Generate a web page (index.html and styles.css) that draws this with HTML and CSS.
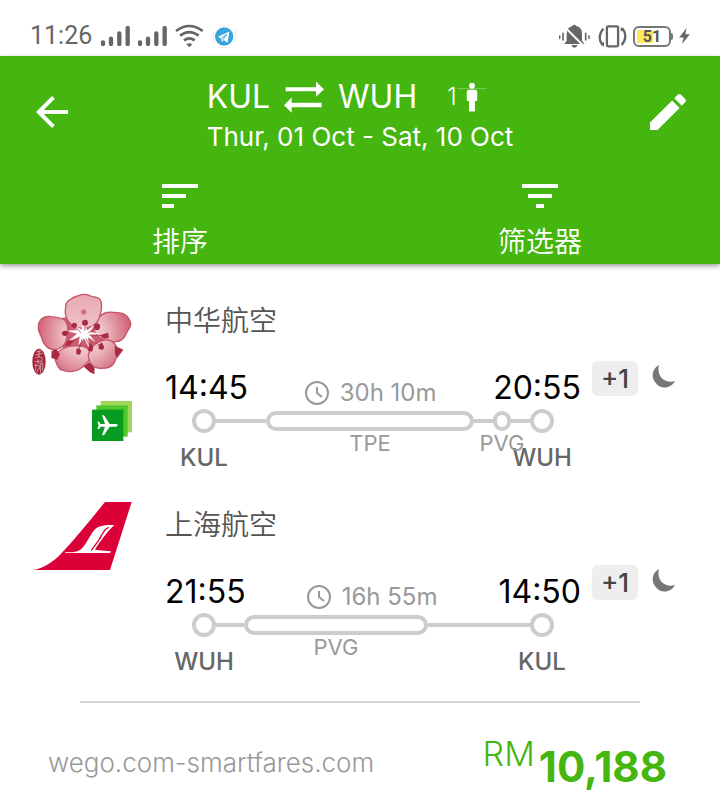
FILE: index.html
```html
<!DOCTYPE html>
<html lang="zh-CN">
<head>
<meta charset="utf-8">
<meta name="viewport" content="width=device-width, initial-scale=1">
<title>KUL – WUH</title>
<link rel="stylesheet" href="styles.css">
</head>
<body>
<div class="status">
  <span class="clock">11:26</span>
  <svg class="signal" viewBox="243 33 87 60" aria-hidden="true"><path d="M249 82v5M273 71v16M298 55v32M323 39v48"/></svg>
  <svg class="signal" viewBox="243 33 87 60" aria-hidden="true"><path d="M249 82v5M273 71v16M298 55v32M323 39v48"/></svg>
  <svg class="wifi" viewBox="465 27 87 72" aria-hidden="true"><path d="M468 48Q508 18 548 48M480 62Q508 41 536 62M492 76Q508 64 524 76"/><path class="solid" d="M499 88q9-6 18 0l-9 9z"/></svg>
  <svg class="telegram" viewBox="581 28 70 70" aria-hidden="true"><path class="corners" d="M582 42v42M649 42v42M596 29h38M596 97h38"/><circle cx="615" cy="63" r="28"/><path class="plane" d="M596 64l35-16-6 34-11-8-6 6-2-10z"/><path class="fold" d="M606 69l17-13-12 17"/></svg>
  <div class="status-right">
    <svg class="muted" viewBox="42 26 93 72" aria-hidden="true"><path d="M58 86l7-10V55q1-19 17-23 6-7 12 0 17 4 17 23v21l7 10zM79 89h19q-3 8-10 8t-9-8z"/><path class="slash" d="M55 31l61 61"/><path class="bars" d="M44 62v7M54 54v20M122 54v20M132 62v7"/></svg>
    <svg class="rotate" viewBox="160 28 86 70" aria-hidden="true"><rect x="186" y="32" width="34" height="61" rx="4"/><path d="M175 39q-21 26-2 51M231 89q21-26 2-51"/><path class="solid" d="M166 82l11-2v15zM240 45l-12 2V33z"/></svg>
    <div class="battery"><span>51</span></div>
    <svg class="bolt" viewBox="402 39 33 49" aria-hidden="true"><path d="M425 39l-23 29h14l-5 20 24-30h-14z"/></svg>
  </div>
</div>

<header class="header">
  <div class="bar">
    <button class="icon-button" type="button" aria-label="返回"><svg viewBox="0 0 24 24"><path d="M20 11H7.830l5.590-5.590L12 4l-8 8 8 8 1.410-1.410L7.830 13H20z"/></svg></button>
    <div class="trip">
      <h1 class="route">
        <span>KUL</span>
        <svg class="swap" viewBox="283 48 120 95" aria-hidden="true"><path d="M288 66h91V49l24 23-24 23V78h-91zM396 113h-90V97l-23 23 23 23v-17h90z"/></svg>
        <span>WUH</span>
        <span class="travellers">1<svg class="person" viewBox="806 48 92 95" aria-hidden="true"><path class="line" d="M806 70h91"/><circle cx="852" cy="61" r="9"/><path d="M843 73h18q7 0 7 8v24q0 3-3 3h-4v32h-18v-32h-4q-3 0-3-3V81q0-8 7-8z"/></svg></span>
      </h1>
      <p class="dates">Thur, 01 Oct - Sat, 10 Oct</p>
    </div>
    <button class="icon-button" type="button" aria-label="编辑"><svg viewBox="0 0 24 24"><path d="M3 17.250V21h3.750L17.810 9.940l-3.750-3.750zM20.710 7.040a1 1 0 0 0 0-1.410l-2.340-2.340a1 1 0 0 0-1.410 0l-1.830 1.830 3.750 3.750z"/></svg></button>
  </div>
  <div class="tools">
    <button class="tool" type="button"><svg viewBox="0 0 24 24" aria-hidden="true"><path d="M3 18h6v-2H3zM3 6v2h18V6zM3 13h12v-2H3z"/></svg>排序</button>
    <button class="tool" type="button"><svg viewBox="0 0 24 24" aria-hidden="true"><path d="M10 18h4v-2h-4zM3 6v2h18V6zM6 13h12v-2H6z"/></svg>筛选器</button>
  </div>
</header>

<main>
  <section class="leg">
    <div class="logos">
      <svg class="airline" viewBox="36 18 300 300" role="img" aria-label="中华航空">
        <defs>
          <radialGradient id="petal" gradientUnits="userSpaceOnUse" cx="193" cy="165" r="145"><stop offset="0" stop-color="#f7e0e2"/><stop offset=".45" stop-color="#edb9c0"/><stop offset="1" stop-color="#cf5c70"/></radialGradient>
          <linearGradient id="top" x1="0" y1="0" x2="0" y2="1"><stop offset="0" stop-color="#e9a9b3"/><stop offset="1" stop-color="#efc2c7"/></linearGradient>
        </defs>
        <g stroke="#c4566b" stroke-width="4" stroke-linejoin="round">
          <path fill="#cb5d71" d="M128 115l110-12 14 58-14 62-98 4-22-60z"/>
          <path fill="url(#petal)" d="M134 120c-12-8-28-8-40-10-22-5-39 10-39 31-1 15 7 21 10 33 5 21 20 36 40 35 17-1 29-12 34-30 6-21 8-44-5-59z"/>
          <path fill="url(#petal)" d="M234 115c17-21 35-20 58-17 22-1 36 13 40 30 2 13-7 20-12 30-7 19-21 29-41 27-23 0-42-10-54-28-8-14-1-31 9-42z"/>
          <path fill="url(#petal)" d="M127 207c20-11 43-11 64-7 15 4 24 17 20 32-5 16-18 24-30 34-15 11-39 11-56 4-12-4-15-19-19-30-2-15 8-26 21-33z"/>
          <path fill="url(#petal)" d="M205 225c8-28 30-43 56-46 19 2 28 14 30 31 3 14-3 27-8 37-8 16-26 19-45 18-17-2-33-14-33-40z"/>
          <path fill="url(#top)" d="M151 59c8-9 17-9 27-13 12-5 27-2 38 4 9 0 19 1 25 10 7 12 4 25 1 38-3 17-10 33-25 40-21 9-44 9-62-3-17-15-22-35-18-56 1-10 6-17 14-20z"/>
        </g>
        <path fill="#fff" stroke="#fff" stroke-width="2" d="M194 136l7 16 20-15-12 20 28 4-29 4 17 21-23-15 6 32-15-29-16 19 3-23-31 11 24-20-27-8 28-2-13-16 24 15 3-13 7 11z"/>
        <g stroke="#ad2942" stroke-width="2" fill="none"><path d="M163 134l20 25M196 128l-2 24M233 140l-30 20M258 167l-50-2M147 190l32-19M174 216l13-40M212 204l-14-28M244 200l-38-26"/></g>
        <g fill="#ab2a43"><circle cx="163" cy="136" r="8"/><circle cx="195" cy="128" r="9"/><ellipse cx="231" cy="140" rx="9" ry="10"/><ellipse cx="135" cy="160" rx="9" ry="8"/><path d="M239 166l25-8 3 16-16 2zM133 197l12-16 16 1-10 14zM169 208l7-4 8 8-4 12-11-1zM206 198l7-9 7 14-4 12-12-3zM236 195l9-8 8 14-5 9-12-3zM95 212l14-4 11 15-9 17-17-7zM284 197l26 12-19 26-6-13zM191 260l16-13 17 16-1 20-13-6z"/></g>
        <circle cx="191" cy="96" r="8" fill="#d5798b"/><circle cx="191" cy="96" r="3" fill="#b6536a"/>
        <ellipse cx="57" cy="245" rx="20" ry="39" fill="#a3273c"/>
        <path fill="none" stroke="#efc8cd" stroke-width="2" d="M49 216l16-4M46 225l22-5M57 210v22M46 234l10-4 12 5M44 244h22v-7M54 238v14M47 251v22M44 256h14v11M50 277l7-12M62 251v29M68 251v21M58 250h12"/>
      </svg>
      <svg class="multi" viewBox="216 363 120 120" role="img" aria-label="多家航空公司"><path fill="#a0d65c" d="M242 363h94v94h-94z"/><path fill="#51c72c" d="M229 376h94v94h-94z"/><path fill="#079b21" d="M216 389h94v94h-94z"/><path fill="#fff" d="M293 436q0-4-6-4h-18l-17-26h-6l9 26h-13l-5-7h-5l4 11-4 11h5l5-7h13l-9 26h6l17-26h18q6 0 6-4z"/></svg>
    </div>
    <div class="flight">
      <h2 class="name">中华航空</h2>
      <div class="times">
        <span class="time">14:45</span>
        <span class="duration"><svg viewBox="0 0 24 24" aria-hidden="true"><circle cx="12" cy="12" r="11"/><path d="M12 6v6l5 4"/></svg>30h 10m</span>
        <span class="time">20:55</span>
      </div>
      <div class="track">
        <span class="end"></span>
        <span class="line" style="flex-grow:50"></span>
        <span class="stop" style="flex-grow:200"><span class="stop-code">TPE</span></span>
        <span class="line" style="flex-grow:19"></span>
        <span class="stop" style="flex-grow:10"><span class="stop-code">PVG</span></span>
        <span class="line" style="flex-grow:19"></span>
        <span class="end"></span>
      </div>
      <div class="codes"><span>KUL</span><span>WUH</span></div>
    </div>
    <div class="notes">
      <span class="plus">+1</span>
      <svg class="moon" viewBox="0 0 24 24" role="img" aria-label="夜间航班"><path d="M7 0C0 4-1 12 3 17c5 8 16 7 20-1C13 19 4 11 7 0z"/></svg>
    </div>
  </section>

  <section class="leg">
    <div class="logos">
      <svg class="airline" viewBox="36 0 300 300" role="img" aria-label="上海航空">
        <path fill="#dc0038" d="M255 36h80l-65 204H40c29-6 58-22 83-49 45-47 88-101 132-155z"/>
        <path fill="#fff" d="M283 105c-29-1-51 2-62 17-17 23-25 46-40 57-13 9-33 9-45 7l-4-6 5 9h133l3-5-20-2-28-3c9-17 37-54 58-74z"/>
        <path fill="none" stroke="#dc0038" stroke-width="4" d="M266 112c-15 6-19 20-28 36l-24 33"/>
      </svg>
    </div>
    <div class="flight">
      <h2 class="name">上海航空</h2>
      <div class="times">
        <span class="time">21:55</span>
        <span class="duration"><svg viewBox="0 0 24 24" aria-hidden="true"><circle cx="12" cy="12" r="11"/><path d="M12 6v6l5 4"/></svg>16h 55m</span>
        <span class="time">14:50</span>
      </div>
      <div class="track">
        <span class="end"></span>
        <span class="line" style="flex-grow:28"></span>
        <span class="stop" style="flex-grow:176"><span class="stop-code">PVG</span></span>
        <span class="line" style="flex-grow:102"></span>
        <span class="end"></span>
      </div>
      <div class="codes"><span>WUH</span><span>KUL</span></div>
    </div>
    <div class="notes">
      <span class="plus">+1</span>
      <svg class="moon" viewBox="0 0 24 24" role="img" aria-label="夜间航班"><path d="M7 0C0 4-1 12 3 17c5 8 16 7 20-1C13 19 4 11 7 0z"/></svg>
    </div>
  </section>

  <div class="fare">
    <span class="site">wego.com-smartfares.com</span>
    <span class="price"><span class="currency">RM</span><strong>10,188</strong></span>
  </div>
</main>
</body>
</html>
```
FILE: styles.css
```css
* { box-sizing: border-box; }

body {
  margin: 0;
  background: #fff;
  color: #000;
  font-family: Inter, "Noto Sans CJK SC", sans-serif;
}

svg { display: block; flex: none; }
h1, h2, p { margin: 0; font-weight: 400; }

/* Status bar */
.status {
  display: flex;
  align-items: center;
  height: 56px;
  padding: 16px 30px 0 30px;
  color: #666;
  font-family: Roboto, sans-serif;
}
.clock { margin-right: 9px; font-size: 25px; line-height: 40px; }
.signal { width: 29px; height: 20px; margin-right: 8px; fill: none; stroke: #666; stroke-width: 13; stroke-linecap: round; }
.wifi { width: 29px; height: 24px; fill: none; stroke: #666; stroke-width: 8; }
.wifi .solid, .rotate .solid { fill: #666; stroke: none; }
.telegram { width: 23px; height: 23px; margin-left: 9px; fill: #38a4dc; }
.telegram .corners { fill: none; stroke: #ddd; stroke-width: 2; }
.telegram .plane { fill: #fff; }
.telegram .fold { fill: none; stroke: #38a4dc; stroke-width: 3; }
.status-right { display: flex; align-items: center; margin-left: auto; }
.muted { width: 31px; height: 24px; margin-right: 8px; fill: #666; }
.muted .slash { stroke: #fff; stroke-width: 6; }
.muted .bars { fill: none; stroke: #666; stroke-width: 5; stroke-linecap: round; }
.rotate { width: 29px; height: 23px; margin-right: 6px; fill: none; stroke: #666; stroke-width: 7; }
.battery {
  position: relative;
  width: 38px;
  height: 21px;
  margin-right: 8px;
  border: 2px solid #777;
  border-radius: 6px;
  background: linear-gradient(#ffe75e, #ffe75e) 2px 2px / 16px 13px no-repeat;
  color: #555;
  font-size: 16px;
  font-weight: 700;
  line-height: 17px;
  text-align: center;
}
.battery::after {
  content: "";
  position: absolute;
  top: 5px;
  right: -4px;
  width: 2px;
  height: 7px;
  border-radius: 0 2px 2px 0;
  background: #777;
}
.bolt { width: 11px; height: 16px; fill: #666; }

/* Header */
.header {
  background: #45b50f;
  color: #fff;
  box-shadow: 0 2px 5px rgba(0, 0, 0, .4);
}
.header svg { fill: currentColor; }
button {
  padding: 0;
  border: 0;
  background: none;
  color: inherit;
  font: inherit;
  cursor: pointer;
}
.bar {
  display: flex;
  align-items: flex-start;
  justify-content: space-between;
  padding: 20px 28px 0;
}
.icon-button { margin-top: 12px; }
.icon-button svg, .tool svg { width: 48px; height: 48px; }
.route { display: flex; align-items: center; gap: 14px; font-size: 32px; line-height: 42px; }
.swap { width: 40px; height: 32px; }
.travellers { display: flex; align-items: center; margin-left: 16px; font-size: 24px; font-weight: 300; }
.person { width: 30px; height: 32px; }
.person .line { stroke: #fff; stroke-width: 2; opacity: .5; }
.dates { font-size: 26px; line-height: 38px; }
.tools { display: grid; grid-template-columns: 1fr 1fr; padding: 16px 0 0; }
.tool { display: flex; flex-direction: column; align-items: center; font-size: 28px; font-weight: 350; line-height: 44px; }

/* Flight legs */
main { padding: 22px 44px 0 32px; }
.leg { display: grid; grid-template-columns: 100px 1fr auto; margin-bottom: 15px; }
.logos { display: flex; flex-direction: column; align-items: flex-end; gap: 15px; }
.airline { width: 100px; height: 100px; }
.multi { width: 40px; height: 40px; }
.flight { padding: 15px 0 0 33px; }
.name { margin-bottom: 22px; color: #555; font-size: 28px; font-weight: 350; line-height: 40px; }
.times { display: flex; align-items: flex-start; justify-content: space-between; height: 46px; }
.time { font-size: 32px; line-height: 50px; }
.duration { display: flex; align-items: center; gap: 11px; padding-top: 12px; color: #999; font-size: 24px; line-height: 36px; }
.duration svg { width: 24px; height: 24px; fill: none; stroke: #999; stroke-width: 2; }
.track { display: flex; align-items: center; padding: 0 27px; }
.end { flex: none; width: 24px; height: 24px; border: 4px solid #ccc; border-radius: 50%; }
.line { flex: 1 1 0; height: 4px; background: #ccc; }
.stop { position: relative; flex: 1 1 0; height: 20px; border: 4px solid #ccc; border-radius: 10px; }
.stop-code {
  position: absolute;
  top: 14px;
  left: 50%;
  transform: translateX(-50%);
  color: #999;
  font-size: 22px;
  line-height: 28px;
}
.codes { display: flex; justify-content: space-between; padding-top: 8px; color: #666; font-size: 24px; font-weight: 500; line-height: 34px; }
.codes span { width: 78px; text-align: center; }
.notes { display: flex; align-items: center; gap: 14px; height: 35px; margin: 75px 0 0 11px; }
.plus { width: 46px; border-radius: 6px; background: #eee; color: #444; font-size: 26px; font-weight: 500; line-height: 35px; text-align: center; }
.moon { width: 24px; height: 24px; margin-top: -4px; fill: #777; }

/* Fare */
.fare {
  display: flex;
  justify-content: space-between;
  margin: 22px 9px 0 16px;
  padding-top: 33px;
  background: linear-gradient(#d6d6d6, #d6d6d6) 32px 0 / calc(100% - 59px) 2px no-repeat;
}
.site { padding-top: 8px; color: #999; font-size: 26px; font-weight: 300; line-height: 42px; }
.price { display: flex; align-items: flex-start; gap: 4px; color: #45b50f; }
.currency { font-size: 34px; font-weight: 300; line-height: 40px; }
.price strong { padding-top: 8px; font-size: 42px; font-weight: 700; line-height: 50px; }
```
